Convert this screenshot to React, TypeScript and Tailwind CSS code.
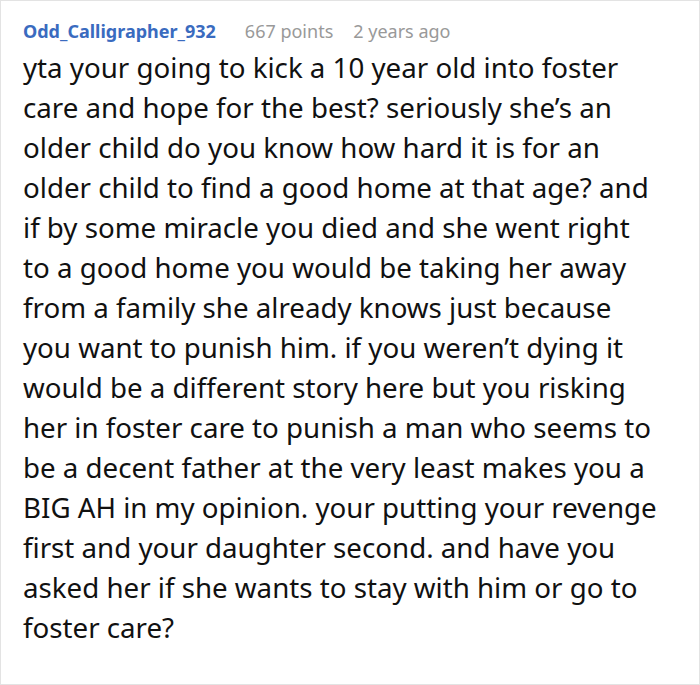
const lines = [
  "yta your going to kick a 10 year old into foster",
  "care and hope for the best? seriously she’s an",
  "older child do you know how hard it is for an",
  "older child to find a good home at that age? and",
  "if by some miracle you died and she went right",
  "to a good home you would be taking her away",
  "from a family she already knows just because",
  "you want to punish him. if you weren’t dying it",
  "would be a different story here but you risking",
  "her in foster care to punish a man who seems to",
  "be a decent father at the very least makes you a",
  "BIG AH in my opinion. your putting your revenge",
  "first and your daughter second. and have you",
  "asked her if she wants to stay with him or go to",
  "foster care?",
];

export default function App() {
  return (
    <div className="h-[685px] w-[700px] border border-[#e3e3e3] bg-white px-[22px] pt-[17px] font-['Noto_Sans',sans-serif]">
      <div className="flex items-baseline text-[18px] leading-[26px]">
        <span className="font-bold text-[#3a6bbf]">Odd_Calligrapher_932</span>
        <span className="ml-[29px] text-[#999999]">667 points</span>
        <span className="ml-[20px] text-[#999999]">2 years ago</span>
      </div>
      <p className="mt-[3px] text-[27.7px] leading-[40px] text-[#111111]">
        {lines.map((line, i) => (
          <span key={i} className="block whitespace-nowrap">
            {line}
          </span>
        ))}
      </p>
    </div>
  );
}
